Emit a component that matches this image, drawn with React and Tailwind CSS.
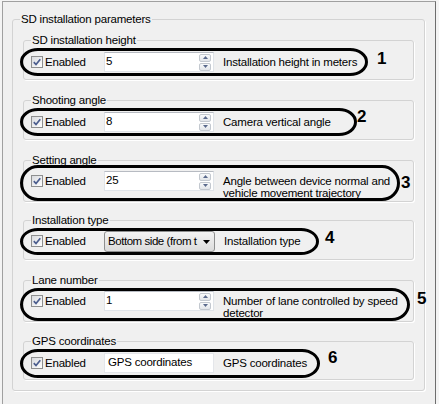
import React from 'react';

// Parameter groups, top to bottom. Class strings are written out in full
// because each oval is a hand-drawn annotation with its own size.
const GROUPS = [
  {
    title: 'SD installation height',
    control: 'spin',
    value: '5',
    desc: ['Installation height in meters'],
    num: '1',
    box: 'mt-0',
    oval: 'w-[348px] h-[28px] mt-[1px] mb-[3px] pt-[1px]',
    numPos: 'ml-[9px] mt-[2px]',
  },
  {
    title: 'Shooting angle',
    control: 'spin',
    value: '8',
    desc: ['Camera vertical angle'],
    num: '2',
    box: 'mt-[13px]',
    oval: 'w-[337px] h-[28px] mt-[1px] mb-[3px] pt-[1px]',
    numPos: 'ml-0 mt-0',
  },
  {
    title: 'Setting angle',
    control: 'spin',
    value: '25',
    desc: ['Angle between device normal and', 'vehicle movement trajectory'],
    num: '3',
    box: 'mt-[13px]',
    oval: 'w-[380px] h-[36px] -mt-[2px] mb-0 pt-[3px]',
    numPos: 'ml-[1px] mt-[6px]',
  },
  {
    title: 'Installation type',
    control: 'combo',
    value: 'Bottom side (from t',
    desc: ['Installation type'],
    num: '4',
    box: 'mt-[11px]',
    oval: 'w-[299px] h-[27px] mt-[1px] mb-[4px] pt-0',
    numPos: 'ml-[6px] mt-[1px]',
  },
  {
    title: 'Lane number',
    control: 'spin',
    value: '1',
    desc: ['Number of lane controlled by speed', 'detector'],
    num: '5',
    box: 'mt-[13px]',
    oval: 'w-[390px] h-[33px] mt-[1px] mb-0 pt-0',
    numPos: 'ml-[7px] mt-[2px]',
  },
  {
    title: 'GPS coordinates',
    control: 'text',
    value: 'GPS coordinates',
    desc: ['GPS coordinates'],
    num: '6',
    box: 'mt-[12px]',
    oval: 'w-[300px] h-[29px] mt-[1px] mb-[1px] pt-[1px]',
    numPos: 'ml-[8px] mt-0',
  },
];

function Checkbox() {
  return (
    <span className="mt-[4px] flex h-[12px] w-[12px] shrink-0 items-center justify-center border border-[#8e8f8f] bg-linear-to-br from-[#d8dade] to-white">
      <svg width="8" height="8" viewBox="0 0 8 8">
        <path d="M0.8 4.2 L3 6.5 L7.3 1.2" fill="none" stroke="#4b5d8e" strokeWidth="1.7" />
      </svg>
    </span>
  );
}

function SpinButton({ up }) {
  return (
    <span className="flex h-[8px] w-[12px] items-center justify-center rounded-[2px] border border-[#c3c8cf] bg-linear-to-b from-[#f9fafb] to-[#e2e5e9]">
      <svg width="5" height="3" viewBox="0 0 5 3">
        <path d={up ? 'M0 3 L2.5 0 L5 3Z' : 'M0 0 L2.5 3 L5 0Z'} fill="#5a6a8c" />
      </svg>
    </span>
  );
}

function Control({ type, value }) {
  if (type === 'combo') {
    return (
      <div className="flex h-[21px] w-[111px] shrink-0 items-center rounded-[3px] border border-[#8e8f8f] bg-linear-to-b from-[#f3f3f3] to-[#dcdcdc] pl-[3px]">
        <span className="flex-1 whitespace-nowrap tracking-[-0.45px]">{value}</span>
        <svg className="mr-[4px] ml-[1px] shrink-0" width="7" height="4" viewBox="0 0 7 4">
          <path d="M0 0 L3.5 4 L7 0Z" fill="#000" />
        </svg>
      </div>
    );
  }
  if (type === 'text') {
    return (
      <div className="flex h-[20px] w-[110px] shrink-0 items-center border border-[#e4e6ea] bg-white pl-[3px] whitespace-nowrap">
        {value}
      </div>
    );
  }
  return (
    <div className="flex h-[20px] w-[110px] shrink-0 items-center border border-[#dfe3e8] border-t-[#b7bbc2] bg-white pl-[1px]">
      <span className="flex-1">{value}</span>
      <div className="mr-[2px] flex flex-col gap-px">
        <SpinButton up />
        <SpinButton />
      </div>
    </div>
  );
}

function Group({ g }) {
  return (
    <fieldset className={`${g.box} ml-[10px] w-[391px] min-w-0 rounded-[3px] border border-[#d3d3d3] shadow-[1px_1px_0_#fff]`}>
      <legend className="ml-[7px] px-[1px] leading-[14px]">{g.title}</legend>
      <div className="flex items-start">
        <div className={`${g.oval} -ml-[4px] flex shrink-0 items-start rounded-[18px/50%] border-[3px] border-black pl-[8px]`}>
          <Checkbox />
          <span className="ml-[2px] w-[59px] shrink-0 leading-[20px]">Enabled</span>
          <Control type={g.control} value={g.value} />
          <div className="ml-[9px] mt-[4px] whitespace-nowrap leading-[12px]">
            {g.desc.map((line) => (
              <div key={line}>{line}</div>
            ))}
          </div>
        </div>
        <span className={`${g.numPos} text-[17px] font-bold leading-[20px] tracking-normal`}>{g.num}</span>
      </div>
    </fieldset>
  );
}

export default function App() {
  return (
    <div className="h-[404px] w-[439px] overflow-hidden bg-[#f4f4f4] pt-[1px] font-['Liberation_Sans',Arial,sans-serif] text-[11.5px] tracking-[-0.2px] text-black">
      <div className="ml-[2px] h-[420px] w-[434px] border-t border-l border-r border-[#a0a0a0] border-r-[#6e6e6e] bg-[#f0f0f0]">
        <fieldset className="mt-[10px] ml-[9px] w-[413px] min-w-0 rounded-[3px] border border-[#d3d3d3] shadow-[1px_1px_0_#fff]">
          <legend className="ml-[7px] px-[1px] leading-[14px]">SD installation parameters</legend>
          <div className="flex flex-col pt-[7px] pb-[10px]">
            {GROUPS.map((g) => (
              <Group key={g.num} g={g} />
            ))}
          </div>
        </fieldset>
      </div>
    </div>
  );
}
